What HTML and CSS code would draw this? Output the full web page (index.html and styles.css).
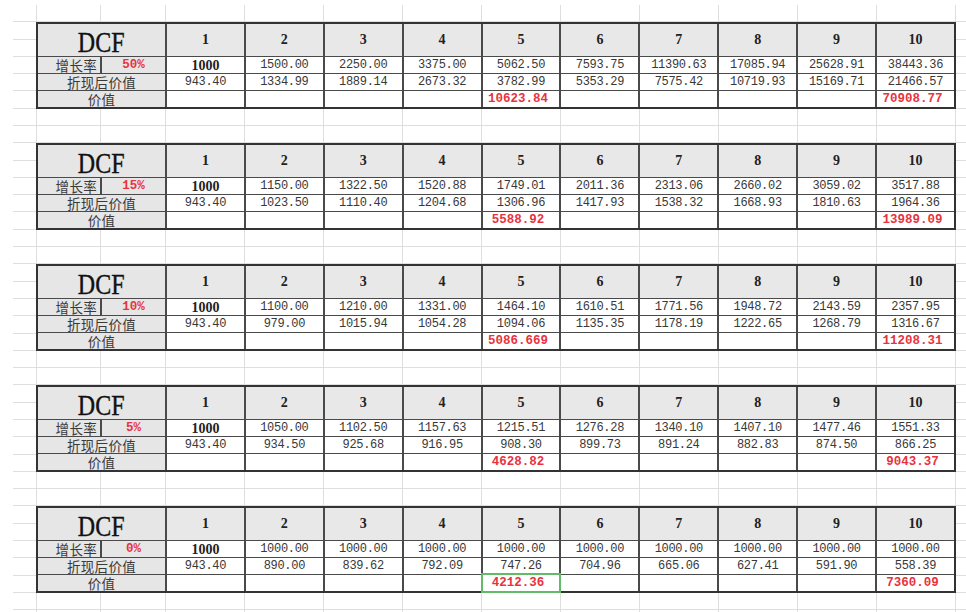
FILE: index.html
```html
<!DOCTYPE html>
<html lang="zh">
<head>
<meta charset="utf-8">
<title>DCF</title>
<link rel="stylesheet" href="styles.css">
</head>
<body>
<div class="sheet">
  <div class="t">
    <div class="c dcf"><span>DCF</span></div>
    <div class="c hd">1</div><div class="c hd">2</div><div class="c hd">3</div><div class="c hd">4</div><div class="c hd">5</div><div class="c hd">6</div><div class="c hd">7</div><div class="c hd">8</div><div class="c hd">9</div><div class="c hd">10</div>
    <div class="c lab">增长率</div><div class="c rate">50%</div>
    <div class="c b">1000</div><div class="c v">1500.00</div><div class="c v">2250.00</div><div class="c v">3375.00</div><div class="c v">5062.50</div><div class="c v">7593.75</div><div class="c v">11390.63</div><div class="c v">17085.94</div><div class="c v">25628.91</div><div class="c v">38443.36</div>
    <div class="c lab2">折现后价值</div>
    <div class="c v">943.40</div><div class="c v">1334.99</div><div class="c v">1889.14</div><div class="c v">2673.32</div><div class="c v">3782.99</div><div class="c v">5353.29</div><div class="c v">7575.42</div><div class="c v">10719.93</div><div class="c v">15169.71</div><div class="c v">21466.57</div>
    <div class="c lab2">价值</div>
    <div class="c v"></div><div class="c v"></div><div class="c v"></div><div class="c v"></div><div class="c red">10623.84</div><div class="c v"></div><div class="c v"></div><div class="c v"></div><div class="c v"></div><div class="c red">70908.77</div>
  </div>

  <div class="t">
    <div class="c dcf"><span>DCF</span></div>
    <div class="c hd">1</div><div class="c hd">2</div><div class="c hd">3</div><div class="c hd">4</div><div class="c hd">5</div><div class="c hd">6</div><div class="c hd">7</div><div class="c hd">8</div><div class="c hd">9</div><div class="c hd">10</div>
    <div class="c lab">增长率</div><div class="c rate">15%</div>
    <div class="c b">1000</div><div class="c v">1150.00</div><div class="c v">1322.50</div><div class="c v">1520.88</div><div class="c v">1749.01</div><div class="c v">2011.36</div><div class="c v">2313.06</div><div class="c v">2660.02</div><div class="c v">3059.02</div><div class="c v">3517.88</div>
    <div class="c lab2">折现后价值</div>
    <div class="c v">943.40</div><div class="c v">1023.50</div><div class="c v">1110.40</div><div class="c v">1204.68</div><div class="c v">1306.96</div><div class="c v">1417.93</div><div class="c v">1538.32</div><div class="c v">1668.93</div><div class="c v">1810.63</div><div class="c v">1964.36</div>
    <div class="c lab2">价值</div>
    <div class="c v"></div><div class="c v"></div><div class="c v"></div><div class="c v"></div><div class="c red">5588.92</div><div class="c v"></div><div class="c v"></div><div class="c v"></div><div class="c v"></div><div class="c red">13989.09</div>
  </div>

  <div class="t">
    <div class="c dcf"><span>DCF</span></div>
    <div class="c hd">1</div><div class="c hd">2</div><div class="c hd">3</div><div class="c hd">4</div><div class="c hd">5</div><div class="c hd">6</div><div class="c hd">7</div><div class="c hd">8</div><div class="c hd">9</div><div class="c hd">10</div>
    <div class="c lab">增长率</div><div class="c rate">10%</div>
    <div class="c b">1000</div><div class="c v">1100.00</div><div class="c v">1210.00</div><div class="c v">1331.00</div><div class="c v">1464.10</div><div class="c v">1610.51</div><div class="c v">1771.56</div><div class="c v">1948.72</div><div class="c v">2143.59</div><div class="c v">2357.95</div>
    <div class="c lab2">折现后价值</div>
    <div class="c v">943.40</div><div class="c v">979.00</div><div class="c v">1015.94</div><div class="c v">1054.28</div><div class="c v">1094.06</div><div class="c v">1135.35</div><div class="c v">1178.19</div><div class="c v">1222.65</div><div class="c v">1268.79</div><div class="c v">1316.67</div>
    <div class="c lab2">价值</div>
    <div class="c v"></div><div class="c v"></div><div class="c v"></div><div class="c v"></div><div class="c red">5086.669</div><div class="c v"></div><div class="c v"></div><div class="c v"></div><div class="c v"></div><div class="c red">11208.31</div>
  </div>

  <div class="t">
    <div class="c dcf"><span>DCF</span></div>
    <div class="c hd">1</div><div class="c hd">2</div><div class="c hd">3</div><div class="c hd">4</div><div class="c hd">5</div><div class="c hd">6</div><div class="c hd">7</div><div class="c hd">8</div><div class="c hd">9</div><div class="c hd">10</div>
    <div class="c lab">增长率</div><div class="c rate">5%</div>
    <div class="c b">1000</div><div class="c v">1050.00</div><div class="c v">1102.50</div><div class="c v">1157.63</div><div class="c v">1215.51</div><div class="c v">1276.28</div><div class="c v">1340.10</div><div class="c v">1407.10</div><div class="c v">1477.46</div><div class="c v">1551.33</div>
    <div class="c lab2">折现后价值</div>
    <div class="c v">943.40</div><div class="c v">934.50</div><div class="c v">925.68</div><div class="c v">916.95</div><div class="c v">908.30</div><div class="c v">899.73</div><div class="c v">891.24</div><div class="c v">882.83</div><div class="c v">874.50</div><div class="c v">866.25</div>
    <div class="c lab2">价值</div>
    <div class="c v"></div><div class="c v"></div><div class="c v"></div><div class="c v"></div><div class="c red">4628.82</div><div class="c v"></div><div class="c v"></div><div class="c v"></div><div class="c v"></div><div class="c red">9043.37</div>
  </div>

  <div class="t">
    <div class="c dcf"><span>DCF</span></div>
    <div class="c hd">1</div><div class="c hd">2</div><div class="c hd">3</div><div class="c hd">4</div><div class="c hd">5</div><div class="c hd">6</div><div class="c hd">7</div><div class="c hd">8</div><div class="c hd">9</div><div class="c hd">10</div>
    <div class="c lab">增长率</div><div class="c rate">0%</div>
    <div class="c b">1000</div><div class="c v">1000.00</div><div class="c v">1000.00</div><div class="c v">1000.00</div><div class="c v">1000.00</div><div class="c v">1000.00</div><div class="c v">1000.00</div><div class="c v">1000.00</div><div class="c v">1000.00</div><div class="c v">1000.00</div>
    <div class="c lab2">折现后价值</div>
    <div class="c v">943.40</div><div class="c v">890.00</div><div class="c v">839.62</div><div class="c v">792.09</div><div class="c v">747.26</div><div class="c v">704.96</div><div class="c v">665.06</div><div class="c v">627.41</div><div class="c v">591.90</div><div class="c v">558.39</div>
    <div class="c lab2">价值</div>
    <div class="c v"></div><div class="c v"></div><div class="c v"></div><div class="c v"></div><div class="c red sel">4212.36</div><div class="c v"></div><div class="c v"></div><div class="c v"></div><div class="c v"></div><div class="c red">7360.09</div>
  </div>
</div>
</body>
</html>
```

FILE: styles.css
```css
html, body {
  margin: 0;
  padding: 0;
  background: #fff;
  overflow: hidden;
}

.sheet {
  margin: 5px 0 0 13px;
  height: 607px;
  box-sizing: border-box;
  padding: 17px 0 0 23px;
  display: flex;
  flex-direction: column;
  gap: 34px;
  background-color: #fff;
  background-image:
    repeating-linear-gradient(to bottom, transparent 0 16.29px, #dedede 16.29px 17.29px),
    repeating-linear-gradient(to right, #dedede 0 1px, transparent 1px 79px),
    linear-gradient(#dedede, #dedede),
    linear-gradient(#dedede, #dedede);
  background-repeat: no-repeat;
  background-size: 100% 100%, calc(100% - 152px) 100%, 1px 100%, 1px 100%;
  background-position: 0 0, 152px 0, 87px 0, 23px 0;
}

.t {
  display: grid;
  width: max-content;
  grid-template-columns: 62px 63px repeat(10, 76.9px);
  grid-template-rows: 32px 16px 16px 16px;
  column-gap: 2px;
  row-gap: 1px;
  background: #4a4a4a;
  border: 2px solid #333;
}

.c {
  background: #fff;
  text-align: center;
  white-space: nowrap;
  color: #383838;
  font-family: "Liberation Mono", "DejaVu Sans Mono", monospace;
  font-size: 12px;
  letter-spacing: -0.3px;
  line-height: 16px;
}

.dcf {
  grid-column: span 2;
  background: #e6e6e6;
  font-family: "Liberation Serif", "Times New Roman", serif;
  font-size: 30px;
  letter-spacing: 0;
  line-height: 36px;
  color: #111;
}

.dcf span {
  display: inline-block;
  transform: scaleX(0.8);
  -webkit-text-stroke: 0.4px #111;
}

.hd {
  background: #e8e8e8;
  font-family: "Liberation Serif", "Times New Roman", serif;
  font-weight: bold;
  font-size: 14px;
  letter-spacing: 0;
  line-height: 32px;
  color: #222;
}

.lab, .lab2 {
  background: #e6e6e6;
  font-family: "Noto Sans CJK SC", "Noto Sans", sans-serif;
  font-size: 13.5px;
  letter-spacing: 0.3px;
  line-height: 16px;
  color: #3a3a3a;
}

.lab {
  text-align: right;
  padding-right: 3px;
}

.lab2 {
  grid-column: span 2;
}

.rate {
  background: #e6e6e6;
  color: #e8333f;
  font-weight: bold;
  font-size: 12.5px;
  letter-spacing: 0;
  line-height: 17px;
}

.b {
  font-family: "Liberation Serif", "Times New Roman", serif;
  font-weight: bold;
  font-size: 14px;
  letter-spacing: 0;
  line-height: 17px;
  color: #222;
}

.red {
  color: #e8333f;
  font-weight: bold;
  font-size: 12.5px;
  letter-spacing: 0;
  line-height: 17px;
  padding-right: 6px;
}

.sel {
  outline: 2px solid #62bb66;
}
```
